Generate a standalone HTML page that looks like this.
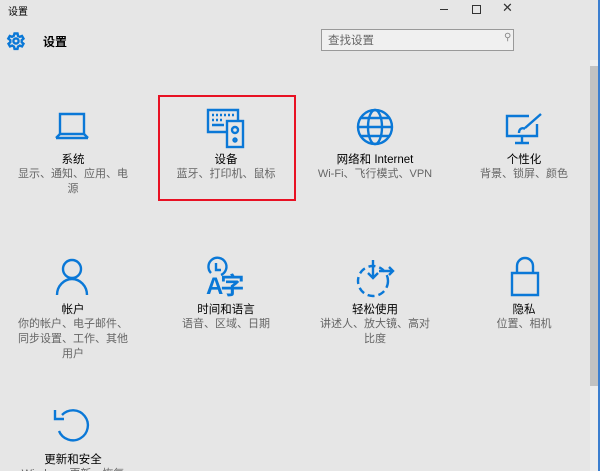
<!DOCTYPE html><html><head><meta charset="utf-8"><style>
html,body{margin:0;width:600px;height:471px;overflow:hidden}
body{background:#e6e6e6;font-family:"Liberation Sans","Noto Sans CJK SC",sans-serif;position:relative}
.a{position:absolute}
.t{position:absolute;width:140px;text-align:center;font-size:11.5px;color:#000}
.d{position:absolute;width:112px;text-align:center;font-size:11px;color:#666;line-height:15px}
svg{position:absolute;fill:none;stroke:#0a78d7;stroke-width:2.4;overflow:visible}
</style></head><body>
<div class="a" style="left:8px;top:3px;font-size:10px">设置</div>
<div class="a" style="left:440px;top:9px;width:8px;border-top:1px solid #333"></div>
<div class="a" style="left:472px;top:5px;width:7px;height:7px;border:1px solid #333"></div>
<div class="a" style="left:502px;top:0px;font-size:13px;color:#333">✕</div>
<svg style="left:7px;top:32px" width="18" height="18" viewBox="0 0 18 18" stroke-width="1.5"><circle cx="9" cy="9" r="2.6"/><path d="M7.5 1.5h3l.5 2.3 1.8 1 2.2-.8 1.5 2.6-1.8 1.6v2l1.8 1.6-1.5 2.6-2.2-.8-1.8 1-.5 2.3h-3l-.5-2.3-1.8-1-2.2.8-1.5-2.6 1.8-1.6v-2L1.3 6.6l1.5-2.6 2.2.8 1.8-1z"/></svg>
<div class="a" style="left:43px;top:33px;font-size:12px;font-weight:bold">设置</div>
<div class="a" style="left:321px;top:29px;width:191px;height:20px;border:1px solid #999;background:#f0f0f0"></div>
<div class="a" style="left:328px;top:32px;font-size:11.5px;color:#666">查找设置</div>
<div class="a" style="left:504px;top:32px;font-size:10px;color:#888">⚲</div>
<div class="a" style="left:590px;top:60px;width:8px;height:411px;background:#ededed"></div>
<div class="a" style="left:590px;top:66px;width:8px;height:320px;background:#c2c2c2"></div>
<div class="a" style="left:598px;top:0;width:2px;height:471px;background:#3c7fd0"></div>
<div class="a" style="left:158px;top:95px;width:134px;height:102px;border:2px solid #e81123"></div>
<!-- row1 -->
<svg style="left:54px;top:112px" width="38" height="30" viewBox="0 0 38 30"><path d="M6 2h24v20H6zM2 26h32"/><path d="M2 26l4-4M34 26l-4-4"/></svg>
<div class="t" style="left:3px;top:151px">系统</div>
<div class="d" style="left:17px;top:167px">显示、通知、应用、电源</div>
<svg style="left:206px;top:108px" width="38" height="40" viewBox="0 0 38 40" stroke-width="2"><path d="M2 2h30v22H2z"/><path d="M6 7h2M10 7h2M14 7h2M18 7h2M22 7h2M26 7h2M6 12h2M10 12h2M14 12h2M6 17h12" /><rect x="21" y="13" width="16" height="26" fill="#e6e6e6"/><circle cx="29" cy="22" r="3"/><circle cx="29" cy="32" r="1.5"/></svg>
<div class="t" style="left:156px;top:151px">设备</div>
<div class="d" style="left:170px;top:167px">蓝牙、打印机、鼠标</div>
<svg style="left:356px;top:108px" width="38" height="38" viewBox="0 0 38 38"><circle cx="19" cy="19" r="17"/><ellipse cx="19" cy="19" rx="7" ry="17"/><path d="M2 19h34M5 10h28M5 28h28"/></svg>
<div class="t" style="left:305px;top:151px">网络和 Internet</div>
<div class="d" style="left:305px;width:140px;top:167px">Wi-Fi、飞行模式、VPN</div>
<svg style="left:505px;top:112px" width="38" height="34" viewBox="0 0 38 34"><path d="M24 4H2v20h30V12M17 24v7M10 31h14"/><path d="M36 2L20 16M14 21c0-4 3-6 6-4"/></svg>
<div class="t" style="left:454px;top:151px">个性化</div>
<div class="d" style="left:468px;top:167px">背景、锁屏、颜色</div>
<!-- row2 -->
<svg style="left:52px;top:257px" width="40" height="40" viewBox="0 0 40 40"><circle cx="20" cy="12" r="9"/><path d="M5 38c0-9 7-16 15-16s15 7 15 16"/></svg>
<div class="t" style="left:3px;top:301px">帐户</div>
<div class="d" style="left:17px;top:317px">你的帐户、电子邮件、同步设置、工作、其他用户</div>
<svg style="left:203px;top:257px" width="40" height="40" viewBox="0 0 40 40" stroke-width="2"><path d="M8 16a9 9 0 1 1 10 2"/><path d="M13 6v7h5"/></svg>
<div class="a" style="left:206px;top:266px;font-size:24px;font-weight:bold;color:#0a78d7;letter-spacing:-3px">A字</div>
<div class="t" style="left:156px;top:301px">时间和语言</div>
<div class="d" style="left:170px;top:317px">语音、区域、日期</div>
<svg style="left:355px;top:257px" width="42" height="42" viewBox="0 0 42 42"><circle cx="18" cy="24" r="15" stroke-dasharray="7 4"/><path d="M18 3v18M13 16l5 5 5-5M24 14h14M34 10l4 4-4 4"/></svg>
<div class="t" style="left:305px;top:301px">轻松使用</div>
<div class="d" style="left:319px;top:317px">讲述人、放大镜、高对比度</div>
<svg style="left:510px;top:257px" width="30" height="40" viewBox="0 0 30 40"><path d="M7 16V9a8 8 0 0 1 16 0v7M2 16h26v22H2z"/></svg>
<div class="t" style="left:454px;top:301px">隐私</div>
<div class="d" style="left:468px;top:317px">位置、相机</div>
<!-- row3 -->
<svg style="left:52px;top:405px" width="42" height="42" viewBox="0 0 42 42"><path d="M10 10A15 15 0 1 1 7 26"/><path d="M3 5v9h9"/></svg>
<div class="t" style="left:3px;top:451px">更新和安全</div>
<div class="d" style="left:17px;top:467px">Windows 更新、恢复</div>
</body></html>
